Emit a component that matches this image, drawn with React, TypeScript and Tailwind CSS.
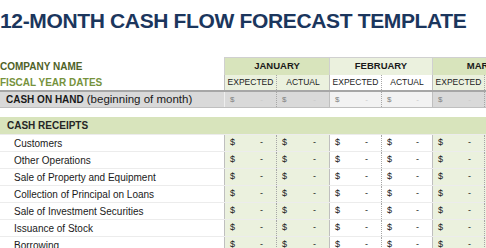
import React from 'react';

type Col = { w: string; border: string; body: string; sub: string; cash: string };

const cols: Col[] = [
  { w: 'w-[52px]', border: 'border-l border-[#bfbfbf]', body: 'bg-[#ebf1de]', sub: 'bg-[#ebf1de]', cash: 'bg-[#d9d9d9] border-l border-[#eeeeee]' },
  { w: 'w-[53px]', border: 'border-l border-dotted border-[#a6a6a6]', body: 'bg-[#ebf1de]', sub: 'bg-[#ebf1de]', cash: 'bg-[#d9d9d9] border-l border-dotted border-[#a6a6a6]' },
  { w: 'w-[52px]', border: 'border-l border-[#bfbfbf]', body: 'bg-white', sub: 'bg-white', cash: 'bg-[#f2f2f2] border-l border-[#bfbfbf]' },
  { w: 'w-[51px]', border: 'border-l border-dotted border-[#a6a6a6]', body: 'bg-white', sub: 'bg-white', cash: 'bg-[#f2f2f2] border-l border-dotted border-[#a6a6a6]' },
  { w: 'w-[52px]', border: 'border-l border-[#bfbfbf]', body: 'bg-[#ebf1de]', sub: 'bg-[#ebf1de]', cash: 'bg-[#d9d9d9] border-l border-[#bfbfbf]' },
  { w: 'w-[52px]', border: 'border-l border-dotted border-[#a6a6a6]', body: 'bg-[#ebf1de]', sub: 'bg-[#ebf1de]', cash: 'bg-[#d9d9d9] border-l border-dotted border-[#a6a6a6]' },
];

const months = [
  { name: 'JANUARY', w: 'w-[105px]', bg: 'bg-[#d8e4bc]' },
  { name: 'FEBRUARY', w: 'w-[103px]', bg: 'bg-[#ebf1de]' },
  { name: 'MARCH', w: 'w-[104px]', bg: 'bg-[#d8e4bc]' },
];

const receipts = [
  'Customers',
  'Other Operations',
  'Sale of Property and Equipment',
  'Collection of Principal on Loans',
  'Sale of Investment Securities',
  'Issuance of Stock',
  'Borrowing',
];

export default function App() {
  return (
    <div className="w-[486px] h-[248px] overflow-hidden bg-white font-['Liberation_Sans',Arial,sans-serif] text-[#1a1a1a]">
      {/* Title */}
      <h1 className="pt-[10px] text-[21px] leading-none font-bold tracking-[-0.35px] text-[#1b365d] whitespace-nowrap">
        12-MONTH CASH FLOW FORECAST TEMPLATE
      </h1>

      <div className="mt-[26px] w-[600px]">
        {/* Month headers */}
        <div className="flex h-[18px]">
          <div className="w-[224px] shrink-0 flex items-center text-[10px] font-bold text-[#4f6228]">COMPANY NAME</div>
          {months.map((m) => (
            <div
              key={m.name}
              className={`${m.w} ${m.bg} shrink-0 flex items-center justify-center border-l border-t border-[#d0d0d0] text-[9.5px] font-bold`}
            >
              {m.name}
            </div>
          ))}
        </div>

        {/* Expected / actual */}
        <div className="flex h-[15px]">
          <div className="w-[224px] shrink-0 flex items-center text-[10px] font-bold text-[#76923c]">FISCAL YEAR DATES</div>
          {cols.map((c, i) => (
            <div
              key={i}
              className={`${c.w} ${c.sub} ${c.border} shrink-0 flex items-center justify-center text-[8.5px]`}
            >
              {i % 2 === 0 ? 'EXPECTED' : 'ACTUAL'}
            </div>
          ))}
        </div>

        {/* Cash on hand */}
        <div className="flex h-[18px] border-t-2 border-b border-t-[#a6a6a6] border-b-[#bfbfbf] bg-[#d9d9d9]">
          <div className="w-[224px] shrink-0 flex items-center pl-[6px] whitespace-nowrap">
            <span className="text-[10px] font-bold">CASH ON HAND</span>
            <span className="text-[11.5px] ml-[3px]">(beginning of month)</span>
          </div>
          {cols.map((c, i) => (
            <div key={i} className={`${c.w} ${c.cash} shrink-0 flex items-center justify-between pl-[5px] pr-[13px] text-[8px] text-[#7f7f7f]`}>
              <span>$</span>
              <span className="text-[#c8c8c8]">-</span>
            </div>
          ))}
        </div>

        {/* Cash receipts */}
        <div className="mt-[9px] h-[17px] bg-[#d8e4bc] flex items-center pl-[7px] text-[10px] font-bold text-[#262626]">
          CASH RECEIPTS
        </div>

        {receipts.map((label) => (
          <div key={label} className="flex h-[17px] border-t border-[#ececec]">
            <div className="w-[224px] shrink-0 flex items-center pl-[14px] text-[10px] whitespace-nowrap">{label}</div>
            {cols.map((c, i) => (
              <div
                key={i}
                className={`${c.w} ${c.body} ${c.border} shrink-0 flex items-center justify-between pl-[5px] pr-[13px] text-[9px]`}
              >
                <span>$</span>
                <span>-</span>
              </div>
            ))}
          </div>
        ))}
      </div>
    </div>
  );
}
